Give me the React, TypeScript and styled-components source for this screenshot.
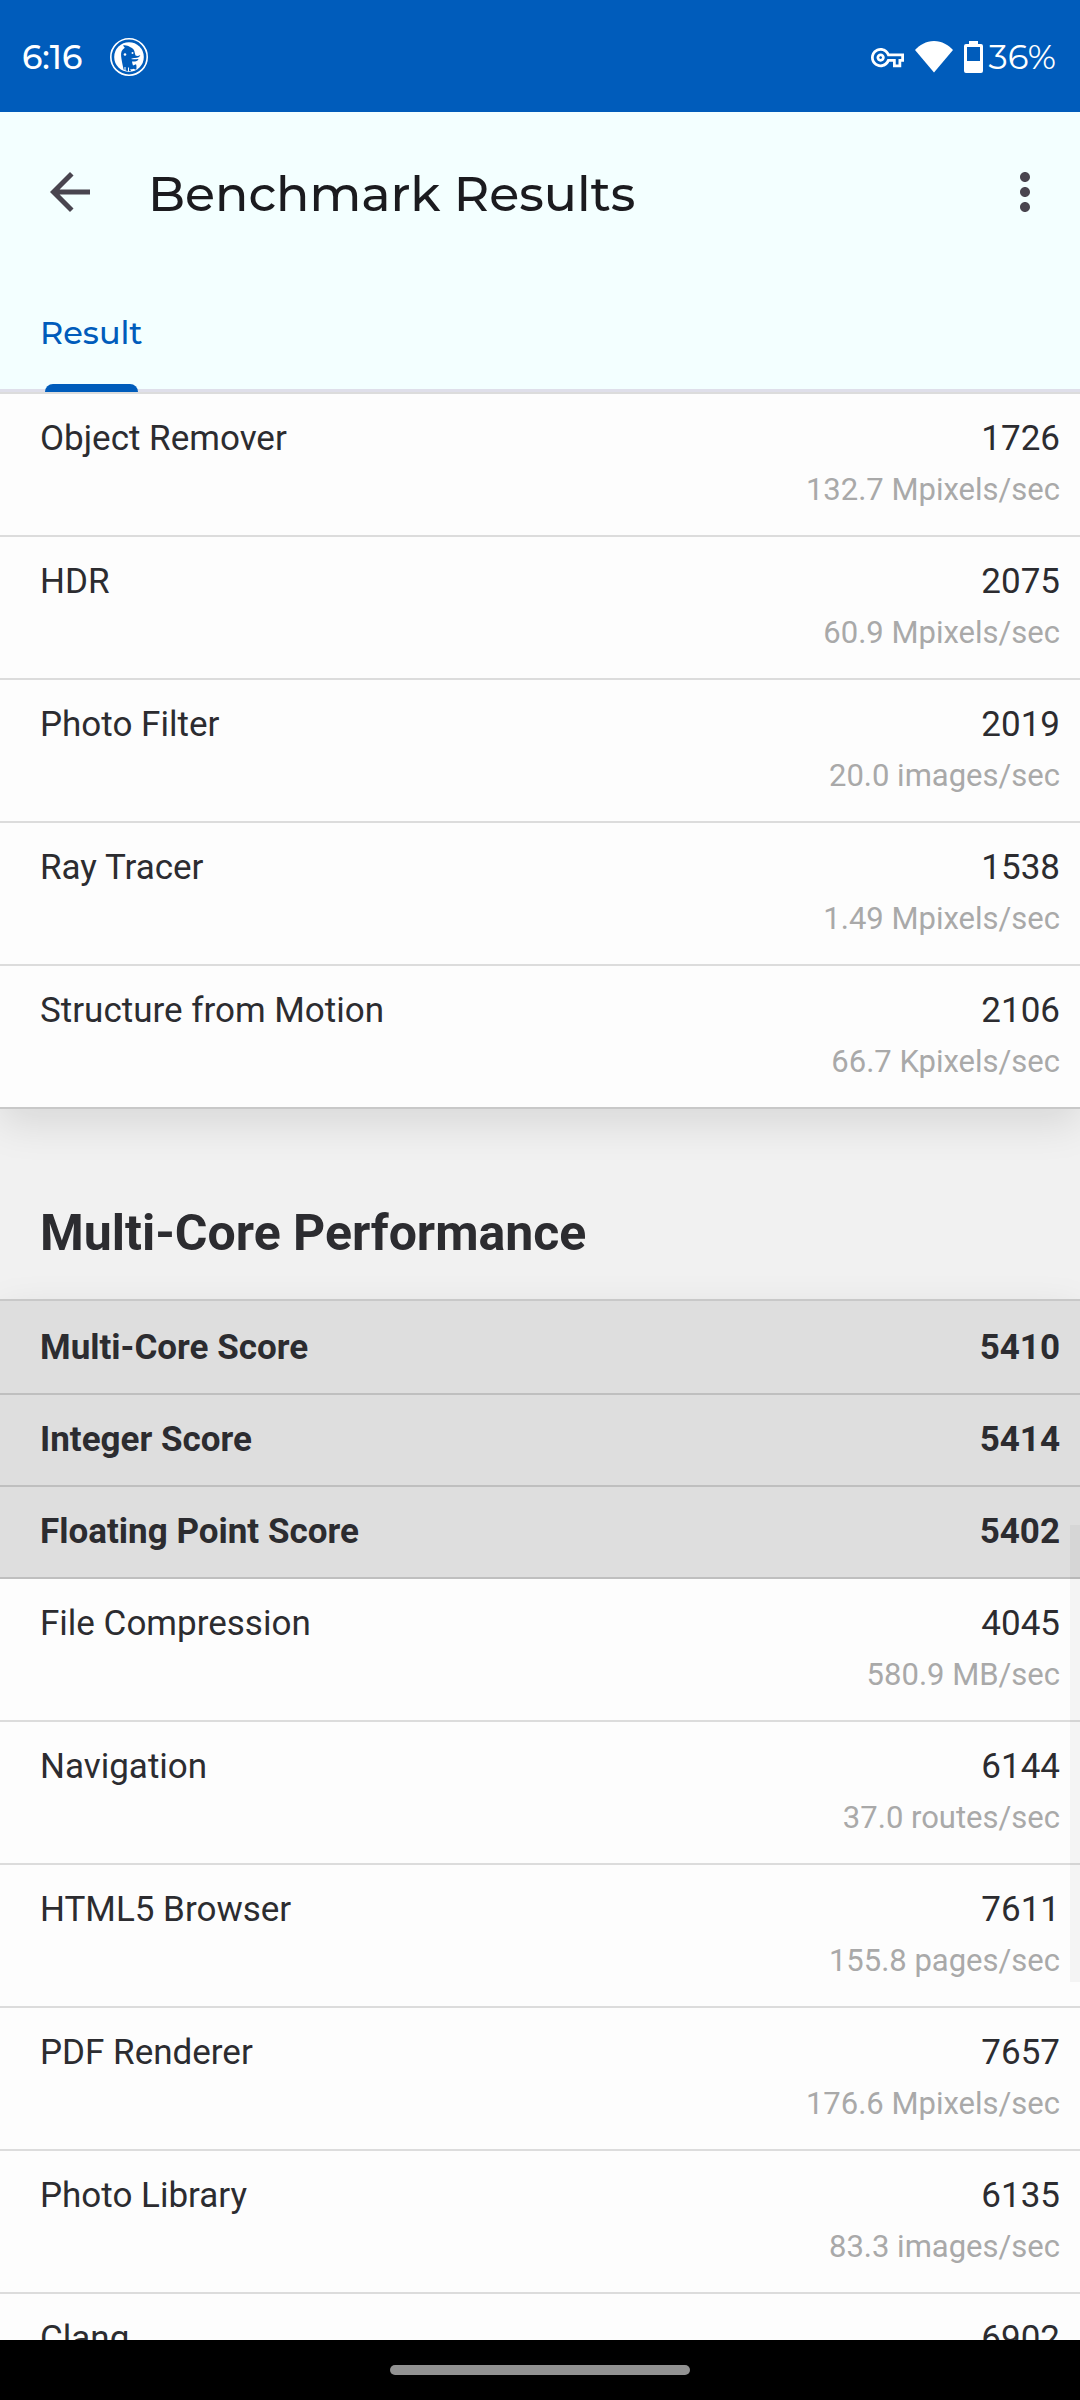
import React from "react";
import styled, { createGlobalStyle } from "styled-components";
import { MdArrowBack, MdMoreVert, MdOutlineVpnKey } from "react-icons/md";

const displayFont = `Montserrat, "Open Sans", "Noto Sans", sans-serif`;

const GlobalStyle = createGlobalStyle`
  *, *::before, *::after { box-sizing: border-box; }
  body {
    margin: 0;
    background: #f1f1f1;
    color: #2c2c30;
    font-family: Roboto, "Liberation Sans", sans-serif;
  }
`;

const Screen = styled.div`
  display: flex;
  flex-direction: column;
  height: 100vh;
`;

const StatusBar = styled.div`
  display: flex;
  align-items: center;
  justify-content: space-between;
  flex: none;
  height: 112px;
  padding: 2px 24px 0 22px;
  background: #005cbb;
  color: #fff;
  font: 500 33px/44px ${displayFont};
`;

const StatusGroup = styled.div<{ $gap: number }>`
  display: flex;
  align-items: center;
  gap: ${(p) => p.$gap}px;
`;

const BatteryLevel = styled.span`
  display: flex;
  align-items: center;
  gap: 6px;
  font-size: 34px;
  font-weight: 400;
`;

const Header = styled.header`
  flex: none;
  background: #f3ffff;
  border-bottom: 3px solid #dfdfea;
`;

const TopBar = styled.div`
  display: flex;
  align-items: center;
  height: 160px;
  padding: 0 25px 0 40px;
`;

const IconButton = styled.button`
  display: flex;
  flex: none;
  padding: 0;
  border: 0;
  background: none;
  color: #49454f;
  cursor: pointer;
`;

const Title = styled.h1`
  flex: 1;
  margin: 0;
  padding: 4px 0 0 48px;
  color: #1b1b1f;
  font: 500 49px/72px ${displayFont};
`;

const Tabs = styled.div`
  display: flex;
  height: 117px;
`;

const Tab = styled.button`
  position: relative;
  padding: 4px 40px 0;
  border: 0;
  background: none;
  color: #005cbb;
  font: 500 32px/44px ${displayFont};
  cursor: pointer;

  &::after {
    content: "";
    position: absolute;
    right: 45px;
    bottom: -3px;
    left: 45px;
    height: 8px;
    border-radius: 8px 8px 0 0;
    background: #005cbb;
  }
`;

const Content = styled.main`
  position: relative;
  flex: 1;
  min-height: 0;
  overflow: hidden;
`;

const ScrollThumb = styled.div`
  position: absolute;
  top: 1133px;
  right: 0;
  width: 10px;
  height: 457px;
  background: rgba(0, 0, 0, 0.035);
`;

const Results = styled.table`
  width: 100%;
  border-spacing: 0;
  background: #fdfdfd;
  box-shadow: 0 14px 40px rgba(0, 0, 0, 0.11);
  font-size: 35px;
  line-height: 50px;

  th, td { padding: 0; vertical-align: top; }
  th { padding-left: 40px; text-align: left; font-weight: inherit; }
  td { padding-right: 20px; text-align: right; }
`;

const WorkloadRow = styled.tr`
  th, td {
    height: 143px;
    padding-top: 20px;
    border-top: 2px solid #dcdcdc;
  }
  &:last-child th, &:last-child td {
    height: 145px;
    border-bottom: 2px solid #c8c8c8;
  }
`;

const ScoreRow = styled.tr`
  background: #dedede;
  font-weight: 700;

  th, td {
    height: 92px;
    padding-top: 20px;
    border-bottom: 2px solid #bfbfbf;
  }
  &:first-child th, &:first-child td {
    height: 96px;
    padding-top: 22px;
    border-top: 2px solid #c8c8c8;
  }
  & + tr:not(&) th, & + tr:not(&) td {
    height: 141px;
    border-top: 0;
  }
`;

const Rate = styled.div`
  color: #a9a9a9;
  font-size: 31px;
  line-height: 52px;
`;

const SectionTitle = styled.h2`
  margin: 0;
  padding: 90px 40px 32px;
  font-size: 50px;
  font-weight: 700;
  line-height: 68px;
`;

const NavigationBar = styled.div`
  display: flex;
  align-items: center;
  justify-content: center;
  flex: none;
  height: 60px;
  background: #000;
`;

const HomeHandle = styled.div`
  width: 300px;
  height: 10px;
  border-radius: 5px;
  background: #919191;
`;

type Workload = { name: string; score: number; rate: string };

const singleCore: Workload[] = [
  { name: "Object Remover", score: 1726, rate: "132.7 Mpixels/sec" },
  { name: "HDR", score: 2075, rate: "60.9 Mpixels/sec" },
  { name: "Photo Filter", score: 2019, rate: "20.0 images/sec" },
  { name: "Ray Tracer", score: 1538, rate: "1.49 Mpixels/sec" },
  { name: "Structure from Motion", score: 2106, rate: "66.7 Kpixels/sec" },
];

const multiCoreScores = [
  { name: "Multi-Core Score", score: 5410 },
  { name: "Integer Score", score: 5414 },
  { name: "Floating Point Score", score: 5402 },
];

const multiCore: Workload[] = [
  { name: "File Compression", score: 4045, rate: "580.9 MB/sec" },
  { name: "Navigation", score: 6144, rate: "37.0 routes/sec" },
  { name: "HTML5 Browser", score: 7611, rate: "155.8 pages/sec" },
  { name: "PDF Renderer", score: 7657, rate: "176.6 Mpixels/sec" },
  { name: "Photo Library", score: 6135, rate: "83.3 images/sec" },
  { name: "Clang", score: 6902, rate: "" },
];

function DuckIcon() {
  return (
    <svg width="38" height="38" viewBox="0 0 38 38" aria-hidden="true">
      <circle cx="19" cy="19" r="18.200" fill="none" stroke="#fff" strokeWidth="1.600" />
      <circle cx="19" cy="19" r="14.800" fill="#fff" />
      <path
        fill="#005cbb"
        d="M13 7.500c2-.8 5 0 7 1.500 3 1.200 4.500 3 4.800 6l.7 2.500c1.500.8 3 .5 4.800-.5-.3 2-2.500 3-5.300 3-1.500 0-2.500.3-4 1 2.500.5 5 .2 7.500 0-.5 2-3 2.700-6.500 2.500.2 1.500.5 2.800 1 4l3-1.200c.6 1.200.7 3.700.2 5.400l-3-1c-1 .7-2 .8-3 .2l.8 2.100c-3 .3-5-.2-7.500-1.500-.5-3-1.500-7-2-10.500-.7-4-.8-7.500 1.300-9.500l2-1.700Z"
      />
      <circle cx="15" cy="16.500" r="1.300" fill="#fff" />
      <circle cx="22.500" cy="15" r="1" fill="#fff" />
      <path d="M15 29v4M18.500 29.500v4" stroke="#fff" strokeWidth="1" />
    </svg>
  );
}

function WifiIcon() {
  return (
    <svg width="38" height="32" viewBox="0 0 38 32" fill="currentColor" aria-hidden="true">
      <path d="M19 31.500 0 9C4.500 4 11 0 19 0s14.500 4 19 9Z" />
    </svg>
  );
}

function BatteryIcon() {
  return (
    <svg width="19" height="32" viewBox="0 0 19 32" fill="currentColor" aria-hidden="true">
      <path
        fillRule="evenodd"
        d="M5 0h9v3h3a2 2 0 0 1 2 2v25a2 2 0 0 1-2 2H2a2 2 0 0 1-2-2V5a2 2 0 0 1 2-2h3ZM3 6v14h13V6Z"
      />
    </svg>
  );
}

function WorkloadRows({ items }: { items: Workload[] }) {
  return (
    <>
      {items.map((item) => (
        <WorkloadRow key={item.name}>
          <th scope="row">{item.name}</th>
          <td>
            {item.score}
            <Rate>{item.rate}</Rate>
          </td>
        </WorkloadRow>
      ))}
    </>
  );
}

export default function App() {
  return (
    <Screen>
      <GlobalStyle />
      <StatusBar>
        <StatusGroup $gap={28}>
          <span>6:16</span>
          <DuckIcon />
        </StatusGroup>
        <StatusGroup $gap={11}>
          <MdOutlineVpnKey size={33} />
          <WifiIcon />
          <BatteryLevel>
            <BatteryIcon />
            36%
          </BatteryLevel>
        </StatusGroup>
      </StatusBar>
      <Header>
        <TopBar>
          <IconButton aria-label="Back">
            <MdArrowBack size={60} />
          </IconButton>
          <Title>Benchmark Results</Title>
          <IconButton aria-label="More options">
            <MdMoreVert size={60} />
          </IconButton>
        </TopBar>
        <Tabs role="tablist">
          <Tab role="tab" aria-selected="true">
            Result
          </Tab>
        </Tabs>
      </Header>
      <Content>
        <Results>
          <tbody>
            <WorkloadRows items={singleCore} />
          </tbody>
        </Results>
        <SectionTitle>Multi-Core Performance</SectionTitle>
        <Results>
          <tbody>
            {multiCoreScores.map((item) => (
              <ScoreRow key={item.name}>
                <th scope="row">{item.name}</th>
                <td>{item.score}</td>
              </ScoreRow>
            ))}
            <WorkloadRows items={multiCore} />
          </tbody>
        </Results>
        <ScrollThumb />
      </Content>
      <NavigationBar>
        <HomeHandle />
      </NavigationBar>
    </Screen>
  );
}
